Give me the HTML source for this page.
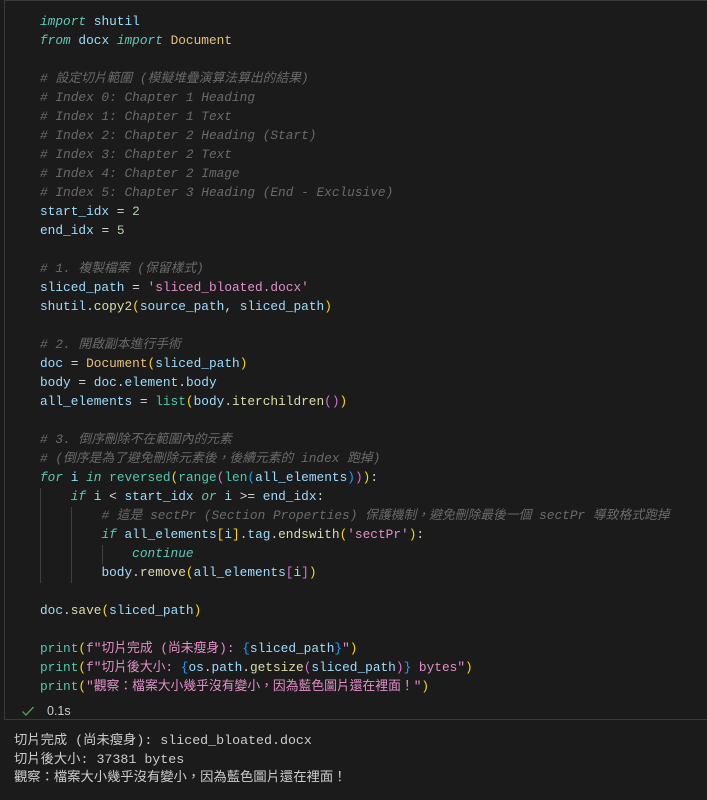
<!DOCTYPE html>
<html><head><meta charset="utf-8"><style>
html,body{margin:0;padding:0;background:#1b1b1b;width:707px;height:800px;overflow:hidden}
.cell{position:absolute;left:4px;top:0;width:710px;height:720px;border-left:1px solid #3a3a3a;border-top:1px solid #3a3a3a;border-bottom:1px solid #3a3a3a;box-sizing:border-box}
pre{margin:0;font-family:"Liberation Mono","Noto Sans CJK TC",monospace;font-size:12.8px;line-height:19px;color:#d4d4d4;white-space:pre}
.code{position:absolute;left:40px;top:12px}
.k{color:#5ccab4;font-style:italic}
.c{color:#6a6a6a;font-style:italic}
.v{color:#9cdcfe}
.f{color:#dcdcaa}
.b{color:#4ec9b0}
.s{color:#e38fc8}
.n{color:#b5cea8}
.cl{color:#e5c07b}
.y{color:#ffd700}
.p{color:#da70d6}
.bl{color:#179fff}
.g{position:absolute;width:1px;background:#404040}
.out{position:absolute;left:14px;top:732px;line-height:18.5px;color:#cccccc;font-size:13.3px}
.chk{position:absolute;left:21px;top:704px}
.t{position:absolute;left:47px;top:704px;font-family:"Liberation Sans",sans-serif;font-size:12.5px;color:#cccccc}
</style></head><body>
<div class="cell"></div>
<div class="g" style="left:40px;top:488px;height:95px"></div>
<div class="g" style="left:71px;top:507px;height:76px"></div>
<div class="g" style="left:102px;top:545px;height:19px"></div>
<pre class="code"><span class="k">import</span> <span class="v">shutil</span>
<span class="k">from</span> <span class="v">docx</span> <span class="k">import</span> <span class="cl">Document</span>

<span class="c"># 設定切片範圍 (模擬堆疊演算法算出的結果)</span>
<span class="c"># Index 0: Chapter 1 Heading</span>
<span class="c"># Index 1: Chapter 1 Text</span>
<span class="c"># Index 2: Chapter 2 Heading (Start)</span>
<span class="c"># Index 3: Chapter 2 Text</span>
<span class="c"># Index 4: Chapter 2 Image</span>
<span class="c"># Index 5: Chapter 3 Heading (End - Exclusive)</span>
<span class="v">start_idx</span> = <span class="n">2</span>
<span class="v">end_idx</span> = <span class="n">5</span>

<span class="c"># 1. 複製檔案 (保留樣式)</span>
<span class="v">sliced_path</span> = <span class="s">'sliced_bloated.docx'</span>
<span class="v">shutil</span>.<span class="f">copy2</span><span class="y">(</span><span class="v">source_path</span>, <span class="v">sliced_path</span><span class="y">)</span>

<span class="c"># 2. 開啟副本進行手術</span>
<span class="v">doc</span> = <span class="cl">Document</span><span class="y">(</span><span class="v">sliced_path</span><span class="y">)</span>
<span class="v">body</span> = <span class="v">doc</span>.<span class="v">element</span>.<span class="v">body</span>
<span class="v">all_elements</span> = <span class="b">list</span><span class="y">(</span><span class="v">body</span>.<span class="f">iterchildren</span><span class="p">()</span><span class="y">)</span>

<span class="c"># 3. 倒序刪除不在範圍內的元素</span>
<span class="c"># (倒序是為了避免刪除元素後，後續元素的 index 跑掉)</span>
<span class="k">for</span> <span class="v">i</span> <span class="k">in</span> <span class="b">reversed</span><span class="y">(</span><span class="b">range</span><span class="p">(</span><span class="b">len</span><span class="bl">(</span><span class="v">all_elements</span><span class="bl">)</span><span class="p">)</span><span class="y">)</span>:
    <span class="k">if</span> <span class="v">i</span> &lt; <span class="v">start_idx</span> <span class="k">or</span> <span class="v">i</span> &gt;= <span class="v">end_idx</span>:
        <span class="c"># 這是 sectPr (Section Properties) 保護機制，避免刪除最後一個 sectPr 導致格式跑掉</span>
        <span class="k">if</span> <span class="v">all_elements</span><span class="y">[</span><span class="v">i</span><span class="y">]</span>.<span class="v">tag</span>.<span class="f">endswith</span><span class="y">(</span><span class="s">'sectPr'</span><span class="y">)</span>:
            <span class="k">continue</span>
        <span class="v">body</span>.<span class="f">remove</span><span class="y">(</span><span class="v">all_elements</span><span class="p">[</span><span class="v">i</span><span class="p">]</span><span class="y">)</span>

<span class="v">doc</span>.<span class="f">save</span><span class="y">(</span><span class="v">sliced_path</span><span class="y">)</span>

<span class="b">print</span><span class="y">(</span><span class="s">f"切片完成 (尚未瘦身): </span><span class="bl">{</span><span class="v">sliced_path</span><span class="bl">}</span><span class="s">"</span><span class="y">)</span>
<span class="b">print</span><span class="y">(</span><span class="s">f"切片後大小: </span><span class="bl">{</span><span class="v">os</span>.<span class="v">path</span>.<span class="f">getsize</span><span class="p">(</span><span class="v">sliced_path</span><span class="p">)</span><span class="bl">}</span><span class="s"> bytes"</span><span class="y">)</span>
<span class="b">print</span><span class="y">(</span><span class="s">"觀察：檔案大小幾乎沒有變小，因為藍色圖片還在裡面！"</span><span class="y">)</span></pre>
<svg class="chk" width="14" height="14" viewBox="0 0 14 14"><path d="M1.5 7.5 L5 11 L12.5 3" fill="none" stroke="#4ea24e" stroke-width="1.4"/></svg>
<div class="t">0.1s</div>
<pre class="out">切片完成 (尚未瘦身): sliced_bloated.docx
切片後大小: 37381 bytes
觀察：檔案大小幾乎沒有變小，因為藍色圖片還在裡面！</pre>
</body></html>
